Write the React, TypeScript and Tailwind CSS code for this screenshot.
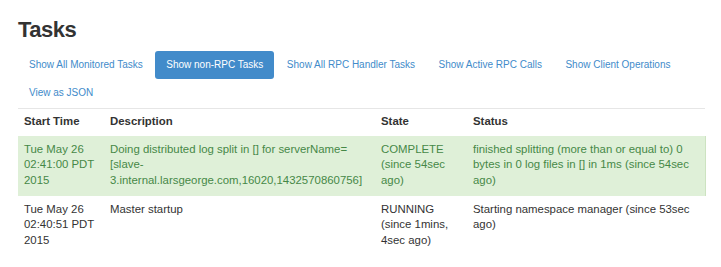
import React from "react";

const pills = [
  "Show All Monitored Tasks",
  "Show non-RPC Tasks",
  "Show All RPC Handler Tasks",
  "Show Active RPC Calls",
  "Show Client Operations",
  "View as JSON",
];

export default function App() {
  return (
    <div
      className="bg-white w-[721px] h-[267px] overflow-hidden text-[#333]"
      style={{ fontFamily: '"Liberation Sans", Arial, sans-serif' }}
    >
      <div className="pl-[18px] pt-[18px]">
        <h1 className="text-[22px] font-bold leading-[24px] tracking-[-0.5px] text-[#333]">Tasks</h1>
        <ul className="mt-[9px] flex flex-wrap w-[687px] gap-x-[1.5px]">
          {pills.map((p, i) => (
            <li key={p}>
              <a
                className={
                  "block h-[28px] leading-[28px] px-[11px] text-[10px] rounded-[3px] whitespace-nowrap " +
                  (i === 1 ? "bg-[#428bca] text-white" : "text-[#428bca]")
                }
              >
                {p}
              </a>
            </li>
          ))}
        </ul>
        <table className="mt-[1px] table-fixed w-[687px] border-t border-[#e6e6e6] text-[11.4px] leading-[15.6px] border-collapse">
          <colgroup>
            <col className="w-[86px]" />
            <col className="w-[271px]" />
            <col className="w-[92px]" />
            <col className="w-[238px]" />
          </colgroup>
          <thead>
            <tr className="h-[27px]">
              <th className="text-left font-bold px-[6px] py-[5px] align-middle">Start Time</th>
              <th className="text-left font-bold px-[6px] py-[5px] align-middle">Description</th>
              <th className="text-left font-bold px-[6px] py-[5px] align-middle">State</th>
              <th className="text-left font-bold px-[6px] py-[5px] align-middle">Status</th>
            </tr>
          </thead>
          <tbody>
            <tr className="bg-[#dff0d8] text-[#468847] h-[60px]">
              <td className="px-[6px] py-[6px] align-top whitespace-nowrap">
                Tue May 26<br />02:41:00 PDT<br />2015
              </td>
              <td className="px-[6px] py-[6px] align-top whitespace-nowrap">
                Doing distributed log split in [] for serverName=
                <br />[slave-
                <br />3.internal.larsgeorge.com,16020,1432570860756]
              </td>
              <td className="px-[6px] py-[6px] align-top whitespace-nowrap">
                COMPLETE<br />(since 54sec<br />ago)
              </td>
              <td className="px-[6px] py-[6px] align-top whitespace-nowrap border-r border-[#cde3c1]">
                finished splitting (more than or equal to) 0
                <br />bytes in 0 log files in [] in 1ms (since 54sec
                <br />ago)
              </td>
            </tr>
            <tr>
              <td className="px-[6px] py-[6px] align-top whitespace-nowrap">
                Tue May 26<br />02:40:51 PDT<br />2015
              </td>
              <td className="px-[6px] py-[6px] align-top whitespace-nowrap">Master startup</td>
              <td className="px-[6px] py-[6px] align-top whitespace-nowrap">
                RUNNING<br />(since 1mins,<br />4sec ago)
              </td>
              <td className="px-[6px] py-[6px] align-top whitespace-nowrap">
                Starting namespace manager (since 53sec
                <br />ago)
              </td>
            </tr>
          </tbody>
        </table>
      </div>
    </div>
  );
}
